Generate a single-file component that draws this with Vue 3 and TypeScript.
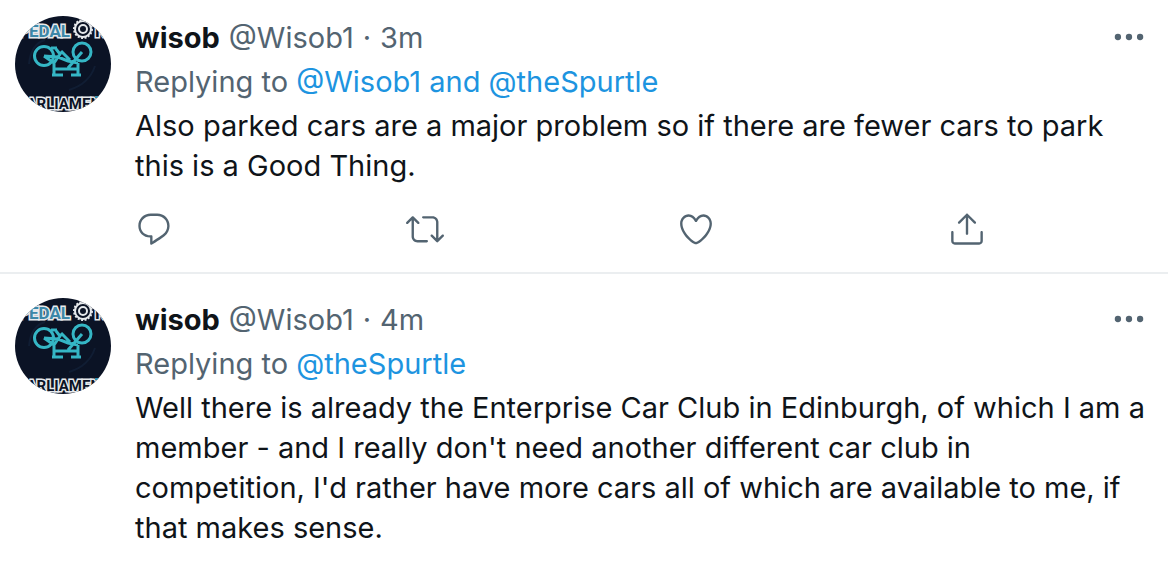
<script setup lang="ts">
interface Tweet {
  id: number
  name: string
  handle: string
  age: string
  replyingTo: string
  text: string
  actions: boolean
}

interface Action {
  label: string
  paths: string[]
}

const tweets: Tweet[] = [
  {
    id: 1,
    name: 'wisob',
    handle: '@Wisob1',
    age: '3m',
    replyingTo: '@Wisob1 and @theSpurtle',
    text: 'Also parked cars are a major problem so if there are fewer cars to park this is a Good Thing.',
    actions: true,
  },
  {
    id: 2,
    name: 'wisob',
    handle: '@Wisob1',
    age: '4m',
    replyingTo: '@theSpurtle',
    text: "Well there is already the Enterprise Car Club in Edinburgh, of which I am a member - and I really don't need another different car club in competition, I'd rather have more cars all of which are available to me, if that makes sense.",
    actions: false,
  },
]

const actions: Action[] = [
  {
    label: 'Reply',
    paths: [
      'M14.046 2.242l-4.148-.01h-.002c-4.374 0-7.8 3.427-7.8 7.802 0 4.098 3.186 7.206 7.465 7.37v3.828c0 .108.044.286.12.403.142.225.384.347.632.347.138 0 .277-.038.402-.118.264-.168 6.473-4.14 8.088-5.506 1.902-1.61 3.04-3.97 3.043-6.312v-.017c-.006-4.367-3.43-7.787-7.8-7.788zm3.787 12.972c-1.134.96-4.862 3.405-6.772 4.643V16.67c0-.414-.335-.75-.75-.75h-.396c-3.66 0-6.318-2.476-6.318-5.886 0-3.534 2.768-6.302 6.3-6.302l4.147.01h.002c3.532 0 6.3 2.766 6.302 6.296-.003 1.91-.942 3.844-2.514 5.176z',
    ],
  },
  {
    label: 'Retweet',
    paths: [
      'M23.77 15.67c-.292-.293-.767-.293-1.06 0l-2.22 2.22V7.65c0-2.068-1.683-3.75-3.75-3.75h-5.85c-.414 0-.75.336-.75.75s.336.75.75.75h5.85c1.24 0 2.25 1.01 2.25 2.25v10.24l-2.22-2.22c-.293-.293-.768-.293-1.06 0s-.294.768 0 1.06l3.5 3.5c.145.147.337.22.53.22s.383-.072.53-.22l3.5-3.5c.294-.292.294-.767 0-1.06zm-10.66 3.28H7.26c-1.24 0-2.25-1.01-2.25-2.25V6.46l2.22 2.22c.148.147.34.22.532.22s.384-.073.53-.22c.293-.293.293-.768 0-1.06l-3.5-3.5c-.293-.294-.768-.294-1.06 0l-3.5 3.5c-.294.292-.294.767 0 1.06s.767.293 1.06 0l2.22-2.22V16.7c0 2.068 1.683 3.75 3.75 3.75h5.85c.414 0 .75-.336.75-.75s-.337-.75-.75-.75z',
    ],
  },
  {
    label: 'Like',
    paths: [
      'M12 21.638h-.014C9.403 21.59 1.95 14.856 1.95 8.478c0-3.064 2.525-5.754 5.403-5.754 2.29 0 3.83 1.58 4.646 2.73.814-1.148 2.354-2.73 4.645-2.73 2.88 0 5.404 2.69 5.404 5.755 0 6.376-7.454 13.11-10.037 13.157H12zM7.354 4.225c-2.08 0-3.903 1.988-3.903 4.255 0 5.74 7.034 11.596 8.55 11.658 1.518-.062 8.55-5.917 8.55-11.658 0-2.267-1.823-4.255-3.903-4.255-2.528 0-3.94 2.936-3.952 2.965-.23.562-1.156.562-1.387 0-.014-.03-1.425-2.965-3.954-2.965z',
    ],
  },
  {
    label: 'Share',
    paths: [
      'M17.53 7.47l-5-5c-.293-.293-.768-.293-1.06 0l-5 5c-.294.293-.294.768 0 1.06s.767.294 1.06 0l3.72-3.72V15c0 .414.336.75.75.75s.75-.336.75-.75V4.81l3.72 3.72c.146.147.338.22.53.22s.384-.072.53-.22c.293-.293.293-.767 0-1.06z',
      'M19.708 21.944H4.292C3.028 21.944 2 20.916 2 19.652V14c0-.414.336-.75.75-.75s.75.336.75.75v5.652c0 .437.355.792.792.792h15.416c.437 0 .792-.355.792-.792V14c0-.414.336-.75.75-.75s.75.336.75.75v5.652c0 1.264-1.028 2.292-2.292 2.292z',
    ],
  },
]
</script>

<template>
  <main class="timeline">
    <article v-for="tweet in tweets" :key="tweet.id" class="tweet">
      <a class="avatar" href="#" :aria-label="tweet.name">
        <svg viewBox="0 0 96 96" aria-hidden="true">
          <rect width="96" height="96" fill="#0b1325" />
          <path d="M14 48Q16 28 30 24M54 74Q74 68 80 50" fill="none" stroke="#101d33" stroke-width="2" />
          <text x="3" y="21" font-size="17" class="lettering blue">PEDAL</text>
          <text x="80" y="21" font-size="17" class="lettering dark">N</text>
          <circle cx="68" cy="13" r="8" fill="#0b1325" stroke="#e6e9ec" stroke-width="2" />
          <circle cx="68" cy="13" r="9" fill="none" stroke="#e6e9ec" stroke-width="2" stroke-dasharray="2 1.5" />
          <circle cx="68" cy="13" r="4" fill="none" stroke="#e6e9ec" stroke-width="2" />
          <g class="bike">
            <circle cx="29" cy="40" r="9.5" />
            <circle cx="67" cy="36" r="9" />
            <path d="M29 40L39 47M29 40L43 41L53 45L63 47M41 33L45 38L39 47V59M36 32H42M46 35L55 44M67 36L53 52M40 53H63M63 47V59M37 59H48M56 59H66" />
          </g>
          <text x="3" y="93" font-size="15" class="lettering dark">PARLIAMEN</text>
          <path d="M80 80h13v7h-9v-5h-4z" fill="#2f8fb5" />
        </svg>
      </a>
      <div class="content">
        <header class="meta">
          <a class="name" href="#">{{ tweet.name }}</a>
          <a class="handle" href="#">{{ tweet.handle }}</a>
          <span class="dot">·</span>
          <time>{{ tweet.age }}</time>
          <button class="more" type="button" aria-label="More">
            <svg viewBox="0 0 24 24" aria-hidden="true">
              <circle cx="5" cy="12" r="2" />
              <circle cx="12" cy="12" r="2" />
              <circle cx="19" cy="12" r="2" />
            </svg>
          </button>
        </header>
        <p class="reply-to">Replying to <a href="#">{{ tweet.replyingTo }}</a></p>
        <p class="body">{{ tweet.text }}</p>
        <div v-if="tweet.actions" class="actions">
          <button v-for="action in actions" :key="action.label" type="button" :aria-label="action.label">
            <svg viewBox="0 0 24 24" aria-hidden="true">
              <path v-for="path in action.paths" :key="path" :d="path" />
            </svg>
          </button>
        </div>
      </div>
    </article>
  </main>
</template>

<style>
body {
  margin: 0;
  background: #fff;
}
</style>

<style scoped>
.timeline {
  font-family: Inter, "Liberation Sans", sans-serif;
  font-size: 29px;
  line-height: 40px;
  color: #0f1419;
}

.tweet {
  display: flex;
  gap: 24px;
  padding: 24px 20px 24px 15px;
}

.tweet:first-child {
  padding-top: 16px;
}

.tweet + .tweet {
  border-top: 2px solid #ebeef0;
}

.avatar {
  flex: none;
  width: 96px;
  height: 96px;
  border-radius: 50%;
  overflow: hidden;
}

.avatar svg {
  display: block;
  width: 100%;
}

.lettering {
  font-family: Roboto, "Liberation Sans", sans-serif;
  font-weight: 700;
  paint-order: stroke;
  stroke: #e6e9ec;
  stroke-width: 3px;
}

.blue {
  fill: #3c87a8;
}

.dark {
  fill: #0b1325;
}

.bike {
  fill: none;
  stroke: #35b6c5;
  stroke-width: 3px;
}

.content {
  flex: 1;
  min-width: 0;
  padding-top: 2px;
}

.meta {
  display: flex;
  align-items: flex-start;
  gap: 9px;
  color: #536471;
}

a {
  color: inherit;
  text-decoration: none;
}

.name {
  font-weight: 700;
  color: #0f1419;
}

button {
  display: block;
  padding: 0;
  border: 0;
  background: none;
  color: #536471;
  cursor: pointer;
}

button svg {
  display: block;
  width: 38px;
  height: 38px;
  fill: currentColor;
}

.more {
  margin-left: auto;
}

.reply-to,
.body {
  margin: 4px 0 0;
}

.reply-to {
  color: #536471;
}

.reply-to a {
  color: #1d94e0;
}

.actions {
  display: flex;
  justify-content: space-between;
  width: 84%;
  margin-top: 24px;
}
</style>
